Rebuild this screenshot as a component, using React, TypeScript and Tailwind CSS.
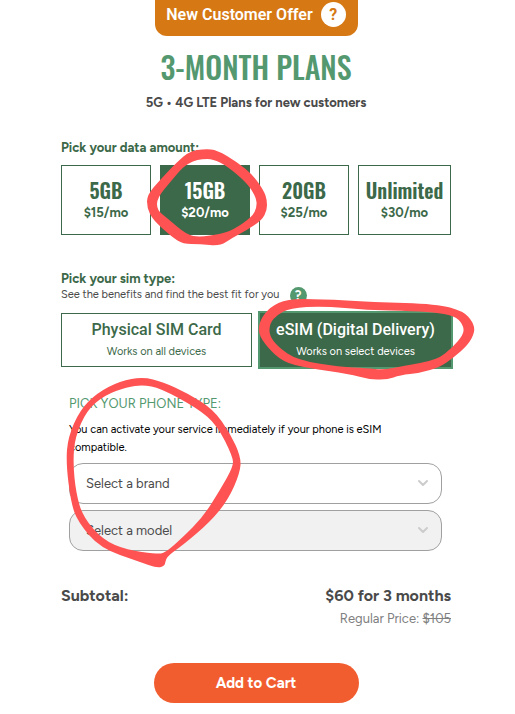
import { useState } from 'react'
import { ChevronDown } from 'lucide-react'

type Point = [number, number]

interface ScribbleProps {
  box: [number, number, number, number]
  outer: Point[]
  inner: Point[]
  className: string
}

const PLANS = [
  { size: '5GB', price: '$15/mo' },
  { size: '15GB', price: '$20/mo' },
  { size: '20GB', price: '$25/mo' },
  { size: 'Unlimited', price: '$30/mo' },
]

const SIMS = [
  { name: 'Physical SIM Card', note: 'Works on all devices' },
  { name: 'eSIM (Digital Delivery)', note: 'Works on select devices' },
]

const DATA_OUTER: Point[] = [[190, 151], [205, 149], [217, 150], [237, 162], [253, 175], [264, 191], [267, 200], [267, 210], [262, 220], [247, 230], [232, 238], [220, 246], [200, 244], [183, 244], [172, 237], [153, 220], [147, 208], [147, 195], [160, 180], [177, 162]]
const DATA_INNER: Point[] = [[193, 161], [202, 159], [213, 159], [227, 166], [247, 183], [256, 197], [257, 207], [252, 217], [233, 230], [220, 234], [200, 237], [187, 235], [167, 218], [157, 210], [157, 198], [172, 180], [183, 167]]

const SIM_OUTER: Point[] = [[287, 299], [320, 299], [373, 302], [437, 304], [463, 311], [473, 322], [475, 332], [468, 345], [453, 358], [440, 367], [420, 373], [400, 375], [387, 380], [367, 379], [350, 374], [307, 368], [283, 362], [267, 347], [258, 333], [260, 320], [270, 307]]
const SIM_INNER: Point[] = [[290, 308], [323, 306], [367, 310], [413, 311], [440, 313], [457, 317], [464, 327], [463, 335], [453, 347], [437, 360], [403, 366], [383, 370], [367, 368], [340, 367], [297, 360], [278, 347], [269, 335], [270, 323], [277, 315]]

const PHONE_OUTER: Point[] = [[143, 377], [163, 382], [187, 393], [213, 409], [230, 433], [241, 457], [240, 473], [228, 500], [210, 522], [183, 545], [166, 557], [165, 566], [157, 568], [140, 562], [100, 548], [78, 522], [71, 503], [66, 463], [68, 437], [80, 410], [97, 393], [120, 381]]
const PHONE_INNER: Point[] = [[143, 385], [160, 388], [197, 408], [217, 425], [233, 457], [233, 467], [220, 490], [203, 517], [182, 538], [165, 553], [157, 554], [127, 550], [103, 540], [83, 517], [76, 493], [73, 463], [75, 437], [87, 410], [105, 395], [127, 387]]

// closed curve running through the midpoints of the given points
function loop(points: Point[]) {
  const mid = (a: Point, b: Point) => `${(a[0] + b[0]) / 2} ${(a[1] + b[1]) / 2}`
  const last = points[points.length - 1]
  const curves = points.map((p, i) => `Q${p[0]} ${p[1]} ${mid(p, points[(i + 1) % points.length])}`)
  return `M${mid(last, points[0])}${curves.join('')}Z`
}

function Scribble({ box, outer, inner, className }: ScribbleProps) {
  return (
    <svg
      aria-hidden="true"
      viewBox={box.join(' ')}
      width={box[2]}
      height={box[3]}
      className={`absolute z-10 max-w-none pointer-events-none ${className}`}
    >
      <path d={loop(outer) + loop(inner)} fill="#ff5252" fillRule="evenodd" />
    </svg>
  )
}

function Chevron() {
  return <ChevronDown size={16} strokeWidth={3} className="absolute right-[11px] top-3 text-[#cccccc] pointer-events-none" />
}

export default function App() {
  const [plan, setPlan] = useState('15GB')
  const [sim, setSim] = useState(SIMS[1].name)

  return (
    <main className="bg-white pl-[61px] pr-16 pb-[11px] overflow-hidden font-['Proxima_Nova','Figtree','Lato',sans-serif] text-[#4a4a4a]">
      <header className="flex flex-col items-center text-center">
        <div className="h-9 w-[203px] rounded-b-xl bg-[#d67915] flex items-start justify-center gap-2 pt-[2px] text-white">
          <span className="font-['Roboto',sans-serif] font-semibold text-base leading-[26px] whitespace-nowrap">New Customer Offer</span>
          <button aria-label="About this offer" className="size-[25px] rounded-full bg-white text-[#d67915] font-['Roboto',sans-serif] font-bold text-base leading-[25px]">?</button>
        </div>
        <h1 className="mt-[11px] font-['Oswald','Roboto_Condensed','Liberation_Sans_Narrow',sans-serif] font-medium text-[30px] leading-10 text-[#53986f] whitespace-nowrap">3-MONTH PLANS</h1>
        <p className="mt-[6px] font-bold text-[13px] leading-5">5G • 4G LTE Plans for new customers</p>
      </header>

      {/* Data amount */}
      <section>
        <h2 className="mt-[25px] font-bold text-[13px] leading-5 text-[#3c6949]">Pick your data amount:</h2>
        <div className="mt-[7px] grid grid-cols-[1fr_1fr_1fr_93px] gap-[9px]">
          {PLANS.map(p => (
            <div key={p.size} className="relative">
              <button
                onClick={() => setPlan(p.size)}
                className={`w-full h-[70px] border border-[#3c6949] flex flex-col items-center justify-center gap-[2px] ${plan === p.size ? 'bg-[#3c6949] text-white' : 'bg-white text-[#3c6949]'}`}
              >
                <span className="font-['Oswald','Roboto_Condensed','Liberation_Sans_Narrow',sans-serif] font-semibold text-xl leading-6">{p.size}</span>
                <span className="font-bold text-[13px] leading-[18px]">{p.price}</span>
              </button>
              {p.size === '15GB' && (
                <Scribble box={[140, 145, 135, 105]} outer={DATA_OUTER} inner={DATA_INNER} className="-left-5 -top-5" />
              )}
            </div>
          ))}
        </div>
      </section>

      {/* Sim type */}
      <section>
        <h2 className="mt-9 font-bold text-[13px] leading-4 text-[#3c6949]">Pick your sim type:</h2>
        <div className="flex items-center gap-[10px] h-4 text-[11px] leading-4">
          <span className="whitespace-nowrap">See the benefits and find the best fit for you</span>
          <button aria-label="Compare sim types" className="size-[17px] rounded-full bg-[#53986f] text-white font-bold text-[13px] leading-[17px]">?</button>
        </div>
        <div className="mt-[10px] grid grid-cols-2 gap-2">
          {SIMS.map(s => (
            <div key={s.name} className="relative">
              <button
                onClick={() => setSim(s.name)}
                className={`w-full h-[54px] border border-[#3c6949] flex flex-col items-center justify-center gap-[2px] pt-[2px] whitespace-nowrap ${sim === s.name ? 'bg-[#3c6949] text-white ring-2 ring-[#53986f]' : 'bg-white text-[#3c6949]'}`}
              >
                <span className="font-['Roboto',sans-serif] font-medium text-base leading-5">{s.name}</span>
                <span className="text-[11px] leading-5">{s.note}</span>
              </button>
              {s.name === SIMS[1].name && (
                <Scribble box={[250, 293, 230, 95]} outer={SIM_OUTER} inner={SIM_INNER} className="-left-[10px] -top-5" />
              )}
            </div>
          ))}
        </div>
      </section>

      {/* Phone */}
      <section className="relative mt-[27px] pl-2 pr-[9px]">
        <h2 className="text-[13px] leading-5 text-[#53986f]">PICK YOUR PHONE TYPE:</h2>
        <p className="mt-[7px] pr-8 text-[11px] leading-[18px] text-black">You can activate your service immediately if your phone is eSIM compatible.</p>
        <div className="relative mt-[6px]">
          <select aria-label="Brand" className="block w-full h-[41px] rounded-[14px] border border-[#a0a0a0] bg-white pl-4 pr-8 appearance-none text-[13px] text-[#4a4a4a]">
            <option>Select a brand</option>
          </select>
          <Chevron />
        </div>
        <div className="relative mt-[6px]">
          <select aria-label="Model" disabled className="block w-full h-[41px] rounded-[14px] border border-[#a0a0a0] bg-[#f1f1f1] pl-4 pr-8 appearance-none text-[13px] text-[#4a4a4a] opacity-100">
            <option>Select a model</option>
          </select>
          <Chevron />
        </div>
        <Scribble box={[61, 374, 190, 200]} outer={PHONE_OUTER} inner={PHONE_INNER} className="left-0 -top-5" />
      </section>

      {/* Totals */}
      <section className="mt-[33px]">
        <div className="flex justify-between font-bold text-base leading-6">
          <span>Subtotal:</span>
          <span>$60 for 3 months</span>
        </div>
        <p className="mt-px text-right text-[13px] leading-5 text-[#808080]">
          Regular Price: <s>$105</s>
        </p>
      </section>

      <button className="mt-[34px] mx-auto block w-[205px] h-10 rounded-full bg-[#f25d30] text-white font-bold text-[15px]">Add to Cart</button>
    </main>
  )
}
